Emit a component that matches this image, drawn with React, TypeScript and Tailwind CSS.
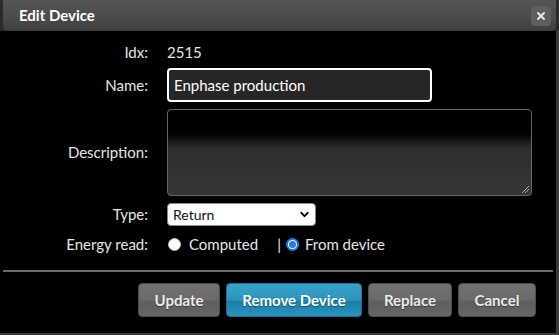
import React from 'react';
import { ChevronDown, X } from 'lucide-react';

const font = "font-['Lato','Liberation_Sans',sans-serif]";

const Row: React.FC<{ label: string; className?: string; children: React.ReactNode }> = ({ label, className, children }) => (
  <div className={`flex items-center ${className ?? ''}`}>
    <div className="w-[148px] shrink-0 text-right text-[15px] text-[#e6e6e6]">{label}</div>
    <div className="ml-[19px] flex items-center">{children}</div>
  </div>
);

const Radio: React.FC<{ checked?: boolean }> = ({ checked }) =>
  checked ? (
    <span className="flex h-[13px] w-[13px] items-center justify-center rounded-full border-2 border-[#1f7ae8] bg-white">
      <span className="block h-[7px] w-[7px] rounded-full bg-[#1f7ae8]" />
    </span>
  ) : (
    <span className="block h-[13px] w-[13px] rounded-full border border-[#bbb] bg-white" />
  );

const Btn: React.FC<{ label: string; w: string; primary?: boolean }> = ({ label, w, primary }) => (
  <button
    className={`${w} h-[34px] rounded-[4px] border text-[15px] font-bold [text-shadow:0_1px_1px_rgba(0,0,0,0.4)] ${
      primary
        ? 'border-[#1b6f93] bg-[linear-gradient(#3aa2ca,#2b94bd_50%,#1a7ea8_55%,#2a94bf)] text-white'
        : 'border-[#4c4c4c] bg-[linear-gradient(#717171,#6a6a6a_50%,#5e5e5e_55%,#666)] text-[#ececec]'
    }`}
  >
    {label}
  </button>
);

export default function App() {
  return (
    <div className={`flex h-[335px] w-[559px] flex-col bg-[#2a2a2a] ${font}`}>
      {/* Title bar */}
      <div className="mx-[3px] flex h-[31px] shrink-0 items-center justify-between rounded-b-[5px] bg-[linear-gradient(#555,#4a4a4a_60%,#3e3e3e)] pl-[16px] pr-[5px]">
        <span className="text-[15px] font-bold text-white">Edit Device</span>
        <span className="flex h-[20px] w-[20px] items-center justify-center rounded-[4px] bg-[#5e5e5e]">
          <X size={12} strokeWidth={4} className="text-[#e8e8e8]" />
        </span>
      </div>

      {/* Body */}
      <div className="flex flex-1 flex-col border-r-[3px] border-b-[2px] border-[#3a3a3a] bg-black">
        <div className="flex flex-col pt-[11px]">
          <Row label="Idx:" className="h-[20px]">
            <span className="text-[15px] text-[#e6e6e6]">2515</span>
          </Row>
          <Row label="Name:" className="mt-[6px]">
            <div className="flex h-[34px] w-[265px] items-center rounded-[4px] border-2 border-white bg-[#262626] pl-[5px] text-[15px] text-white">
              Enphase production
            </div>
          </Row>
          <Row label="Description:" className="mt-[7px]">
            <div className="relative h-[87px] w-[365px] rounded-[4px] border border-[#666] bg-[linear-gradient(#000,#000_28%,#2e2e2e_45%,#363636)]">
              <svg className="absolute bottom-[2px] right-[2px]" width="8" height="8" viewBox="0 0 8 8">
                <path d="M1 8 L8 1 M4 8 L8 4" stroke="#aaa" strokeWidth="1" />
              </svg>
            </div>
          </Row>
          <Row label="Type:" className="mt-[7px]">
            <div className="flex h-[23px] w-[149px] items-center justify-between rounded-[4px] border border-[#888] bg-white pl-[5px] pr-[4px] text-[14px] text-[#111]">
              <span>Return</span>
              <ChevronDown size={13} strokeWidth={3.5} className="text-black" />
            </div>
          </Row>
          <Row label="Energy read:" className="mt-[7px] h-[22px]">
            <div className="flex items-center text-[15px] text-[#e6e6e6]">
              <span className="ml-[1px]"><Radio /></span>
              <span className="ml-[8px]">Computed</span>
              <span className="ml-[19px]">|</span>
              <span className="ml-[5px]"><Radio checked /></span>
              <span className="ml-[6px]">From device</span>
            </div>
          </Row>
        </div>

        <div className="mx-[3px] mt-[15px] h-[2px] bg-[#6b6b6b]" />

        <div className="mt-[11px] flex justify-end gap-[6px] pr-[20px]">
          <Btn label="Update" w="w-[82px]" />
          <Btn label="Remove Device" w="w-[136px]" primary />
          <Btn label="Replace" w="w-[84px]" />
          <Btn label="Cancel" w="w-[78px]" />
        </div>
      </div>
    </div>
  );
}
